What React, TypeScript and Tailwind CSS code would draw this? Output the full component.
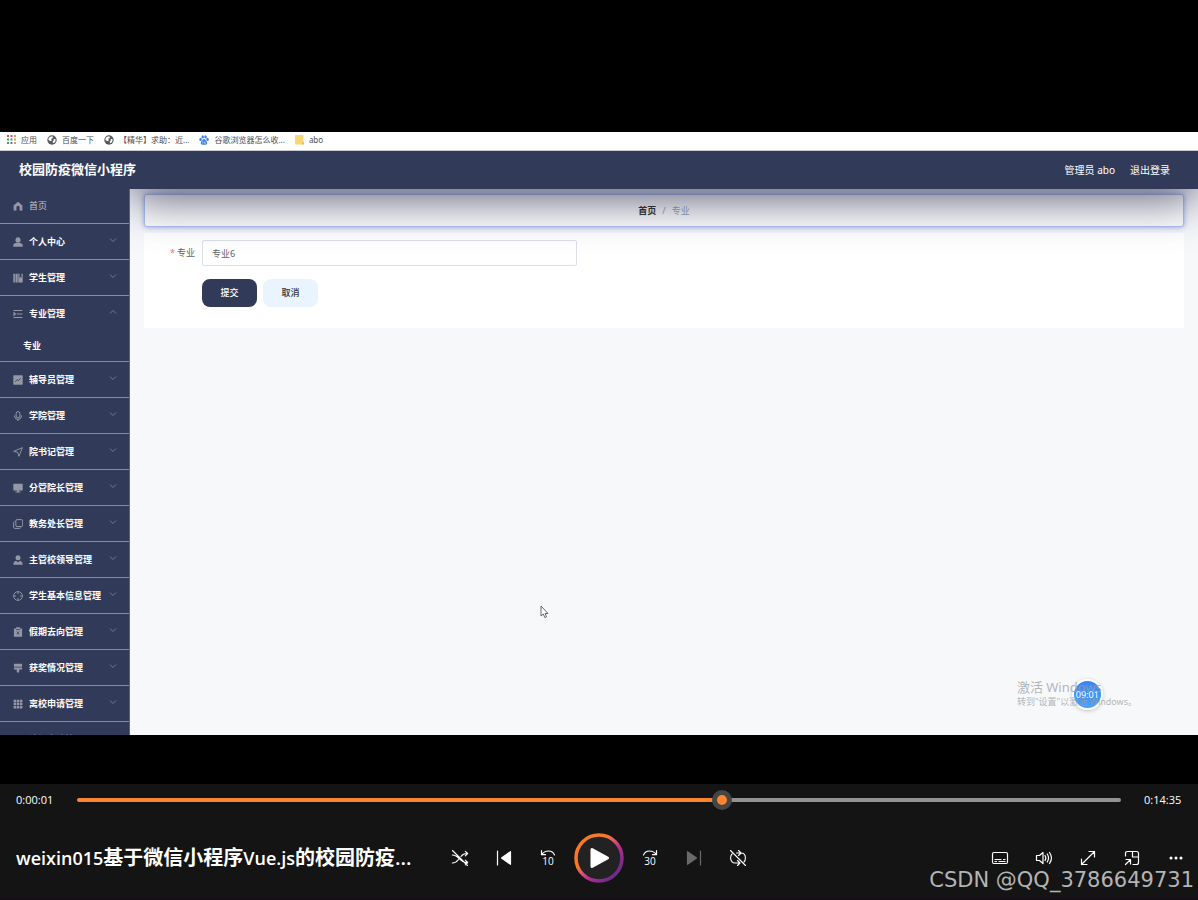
import type { ReactNode } from "react";
import { useState } from "react";

type MenuIconName =
  | "home"
  | "user"
  | "notebook"
  | "list"
  | "chart"
  | "mic"
  | "send"
  | "monitor"
  | "copy"
  | "person"
  | "aim"
  | "clipboard"
  | "brush"
  | "grid"
  | "flag";

interface MenuItem {
  icon: MenuIconName;
  label: string;
  children?: string[];
}

const MENU: MenuItem[] = [
  { icon: "user", label: "个人中心" },
  { icon: "notebook", label: "学生管理" },
  { icon: "list", label: "专业管理", children: ["专业"] },
  { icon: "chart", label: "辅导员管理" },
  { icon: "mic", label: "学院管理" },
  { icon: "send", label: "院书记管理" },
  { icon: "monitor", label: "分管院长管理" },
  { icon: "copy", label: "教务处长管理" },
  { icon: "person", label: "主管校领导管理" },
  { icon: "aim", label: "学生基本信息管理" },
  { icon: "clipboard", label: "假期去向管理" },
  { icon: "brush", label: "获奖情况管理" },
  { icon: "grid", label: "离校申请管理" },
  { icon: "flag", label: "请假申请管理" },
];

const MENU_ICONS: Record<MenuIconName, ReactNode> = {
  home: <path d="M8 1 1 7v8h4.500v-5a2.500 2.500 0 0 1 5 0v5H15V7z" fill="currentColor" />,
  user: (
    <g fill="currentColor">
      <rect x="4" y="0.500" width="8" height="8.500" rx="4" />
      <path d="M0.500 15.500V13c0-2 2-3.500 4.500-3.500h6c2.500 0 4.500 1.500 4.500 3.500v2.500z" />
    </g>
  ),
  notebook: (
    <g fill="currentColor">
      <path d="M0.500 1h2.500v14H0.500zM4 1h3.500v14H4z" />
      <path d="M8.500 1h2v7L12 6.500 13.500 8V1h2v14h-7z" />
    </g>
  ),
  list: (
    <path d="M1 2.500h14M6 8h9M1 13.500h14M1.500 5.800 4 8l-2.500 2.200z" stroke="currentColor" strokeWidth="1.700" fill="none" />
  ),
  chart: (
    <g>
      <rect x="0.500" y="0.500" width="15" height="15" rx="1" fill="currentColor" />
      <path d="m3.500 11 3-3.500 2 1.500 4-4" stroke="#323a59" strokeWidth="1.300" fill="none" />
    </g>
  ),
  mic: (
    <g stroke="currentColor" strokeWidth="1.600" fill="none">
      <rect x="5" y="1" width="6" height="10" rx="3" />
      <path d="M2.500 7v1a5.500 5.500 0 0 0 11 0V7M8 13.500V16" />
    </g>
  ),
  send: <path d="M1 7 15 1 9.500 15 7.500 8.500z" stroke="currentColor" strokeWidth="1.500" fill="none" />,
  monitor: <path d="M0.500 1h15v11h-6v1.500H12V15H4v-1.500h2.500V12h-6z" fill="currentColor" />,
  copy: (
    <g stroke="currentColor" strokeWidth="1.600" fill="none">
      <rect x="4.500" y="1" width="11" height="11" rx="2" />
      <path d="M2.500 4C1 4.500 1 5 1 6v7c0 1.500.5 2 2 2h7c1 0 2 0 2.500-1.500" />
    </g>
  ),
  person: (
    <g fill="currentColor">
      <circle cx="8" cy="4.500" r="4" />
      <path d="M0.500 15.500c0-3.500 1.500-5.500 4.500-6.500l3 3 3-3c3 1 4.500 3 4.500 6.500z" />
    </g>
  ),
  aim: (
    <g stroke="currentColor" strokeWidth="1.500" fill="none">
      <circle cx="8" cy="8" r="7" />
      <path d="M8 1v4M8 11v4M1 8h4M11 8h4" />
    </g>
  ),
  clipboard: (
    <g>
      <path d="M1.500 2.500H5V.5h6v2h3.500v13h-13z" fill="currentColor" />
      <path d="M5 4h6M6 7l4 5M10 7l-4 5" stroke="#323a59" strokeWidth="1.200" />
    </g>
  ),
  brush: <path d="M1.500 1h13v5h-13zM1.500 7h13v3.500H10V14l-2 2-2-2v-3.500H1.500z" fill="currentColor" />,
  grid: (
    <path
      d="M1 1h4v4H1zM6 1h4v4H6zM11 1h4v4h-4zM1 6h4v4H1zM6 6h4v4H6zM11 6h4v4h-4zM1 11h4v4H1zM6 11h4v4H6zM11 11h4v4h-4z"
      fill="currentColor"
    />
  ),
  flag: <path d="M2 1h2v14H2zM5 2h9v7H5z" fill="currentColor" />,
};

function MenuIcon({ name }: { name: MenuIconName }) {
  return (
    <svg viewBox="0 0 16 16" className="size-2.5 shrink-0 text-[#9498a6]" aria-hidden="true">
      {MENU_ICONS[name]}
    </svg>
  );
}

function Chevron({ up = false }: { up?: boolean }) {
  return (
    <svg viewBox="0 0 8 8" className="mb-1 ml-auto size-2 text-[#838899]" fill="none" stroke="currentColor" strokeWidth="0.8" aria-hidden="true">
      <path d={up ? "M1 5.500 4 2.500l3 3" : "M1 2.500 4 5.500l3-3"} />
    </svg>
  );
}

function Globe() {
  return (
    <svg viewBox="0 0 16 16" className="size-2.5" aria-hidden="true">
      <circle cx="8" cy="8" r="7.500" fill="#55585c" />
      <path d="M3 4.500C5 2 8 2 9.500 2.500L9 5 6.500 6 8 8.500 5.500 10 2 7.500zM11 6l3 1-1 4-3 2-1-2 1.500-2z" fill="#fff" />
    </svg>
  );
}

function AppsIcon() {
  const colors = ["#d9534a", "#d9534a", "#e0a33a", "#3f9b5b", "#4a7fd0", "#e0a33a", "#3f9b5b", "#4a7fd0", "#e0a33a"];
  return (
    <svg viewBox="0 0 9 9" className="size-[9px]" aria-hidden="true">
      {colors.map((c, i) => (
        <rect key={i} x={(i % 3) * 3.5} y={Math.floor(i / 3) * 3.5} width="2" height="2" fill={c} />
      ))}
    </svg>
  );
}

function Paw() {
  return (
    <svg viewBox="0 0 16 16" className="size-2.5" fill="#3d82e6" aria-hidden="true">
      <ellipse cx="2.500" cy="7" rx="2" ry="2.500" />
      <ellipse cx="6" cy="3" rx="2" ry="2.700" />
      <ellipse cx="10.500" cy="3" rx="2" ry="2.700" />
      <ellipse cx="13.700" cy="7" rx="2" ry="2.500" />
      <path d="M8 6.500c2 0 2.500 2 4 3.500 2 2 1.500 5.500-1.500 5.500h-5C2.500 15.500 2 12 4 10c1.500-1.500 2-3.500 4-3.500z" />
      <path d="M6 10.500v3M9 10.500v2.500h2" stroke="#fff" fill="none" />
    </svg>
  );
}

function Folder() {
  return (
    <svg viewBox="0 0 9 10" className="h-2.5 w-[9px]" aria-hidden="true">
      <rect width="8.500" height="9.500" rx="1" fill="#f8d775" />
      <path d="M7 7h2v2.500H7z" fill="#efc04f" />
    </svg>
  );
}

function Bookmark({ icon, label }: { icon: ReactNode; label: string }) {
  return (
    <a href="#" className="flex items-center gap-[5px] whitespace-nowrap">
      {icon}
      {label}
    </a>
  );
}

function BookmarkBar() {
  return (
    <div className="flex h-[19px] shrink-0 items-center gap-2.5 border-b border-[#c9cbd2] bg-white pb-[3px] pl-[7px] text-[8px] leading-3 text-[#4c4e52]">
      <Bookmark icon={<AppsIcon />} label="应用" />
      <Bookmark icon={<Globe />} label="百度一下" />
      <Bookmark icon={<Globe />} label="【精华】求助：近..." />
      <Bookmark icon={<Paw />} label="谷歌浏览器怎么收..." />
      <Bookmark icon={<Folder />} label="abo" />
    </div>
  );
}

function Sidebar() {
  return (
    <nav className="w-[130px] shrink-0 overflow-hidden border-r border-[#5a617b] bg-[#323a59] text-[9px] font-bold text-white">
      <a href="#" className="flex h-[35px] items-center gap-1.5 border-b border-[#868ca3] pl-[13px] font-normal text-[#c3c6d0]">
        <MenuIcon name="home" />
        首页
      </a>
      {MENU.map((item) => (
        <div key={item.label} className="border-b border-[#868ca3]">
          <button type="button" className="flex h-[35px] w-full items-center gap-1.5 whitespace-nowrap pl-[13px] pr-3">
            <MenuIcon name={item.icon} />
            {item.label}
            <Chevron up={!!item.children} />
          </button>
          {item.children?.map((child) => (
            <a key={child} href="#" className="flex h-[30px] items-center pl-[23px]">
              {child}
            </a>
          ))}
        </div>
      ))}
    </nav>
  );
}

function MajorForm() {
  const [major, setMajor] = useState("专业6");
  return (
    <form className="mt-1.5 bg-white pb-[21px] pt-[7px] text-[9px]" onSubmit={(e) => e.preventDefault()}>
      <div className="flex items-center">
        <label htmlFor="major" className="w-[58px] shrink-0 pr-[7px] text-right text-[#606266]">
          <span className="mr-0.5 text-[#e8737a]">*</span>专业
        </label>
        <input
          id="major"
          value={major}
          onChange={(e) => setMajor(e.target.value)}
          className="h-[26px] w-[375px] rounded-xs border border-[#dcdfe6] bg-white px-[9px] text-[#606266] outline-none"
        />
      </div>
      <div className="mt-[13px] flex gap-1.5 pl-[58px]">
        <button type="submit" className="h-7 w-[55px] rounded-lg bg-[#323a59] font-medium text-white">
          提交
        </button>
        <button type="button" className="h-7 w-[55px] rounded-lg bg-[#eaf4ff] font-medium text-[#303133]">
          取消
        </button>
      </div>
    </form>
  );
}

function ActivationNotice() {
  return (
    <div className="absolute bottom-[26px] right-[61px]">
      <div className="absolute left-[55px] top-0 flex size-[31px] items-center justify-center rounded-full border-2 border-white bg-linear-to-b from-[#3a84f4] to-[#4aa2fb] text-[9px] text-white shadow-[0_1px_4px_rgba(0,0,0,0.2)]">
        09:01
      </div>
      <div className="relative whitespace-nowrap text-[#9b9da1]/75">
        <p className="text-[13px] leading-4">激活 Windows</p>
        <p className="text-[9px] leading-[14px]">转到"设置"以激活 Windows。</p>
      </div>
    </div>
  );
}

function MousePointer() {
  return (
    <svg viewBox="0 0 9 14" className="absolute left-[410px] top-[416px] h-3.5 w-[9px]" aria-hidden="true">
      <path d="M1 1v10l2.300-2 1.500 3.500 1.700-.7L5 8.500h3z" fill="#fff" stroke="#55585e" strokeWidth="0.900" />
    </svg>
  );
}

function AdminPage() {
  return (
    <div className="flex h-full flex-col overflow-hidden bg-[#f6f8fa]">
      <BookmarkBar />
      <header className="flex h-[38px] shrink-0 items-center bg-[#323a59] pl-[19px] pr-7 text-[10px] text-white">
        <h1 className="text-[13px] font-bold">校园防疫微信小程序</h1>
        <span className="ml-auto">管理员 abo</span>
        <a href="#" className="ml-[15px]">
          退出登录
        </a>
      </header>
      <div className="flex min-h-0 flex-1">
        <Sidebar />
        <main className="relative min-w-0 flex-1 overflow-hidden px-3.5 pt-[5px]">
          <div className="flex h-[33px] items-center justify-center gap-1.5 rounded-[3px] border border-[#b3c0f3] bg-white text-[9px] shadow-[0_0_5px_rgba(90,115,230,0.6)]">
            <a href="#" className="font-bold text-[#303133]">
              首页
            </a>
            <span className="text-[#9aa3b5]">/</span>
            <span className="text-[#97a8be]">专业</span>
          </div>
          <MajorForm />
          {/* header shadow falling over the content */}
          <div className="pointer-events-none absolute inset-x-0 -top-24 h-24 shadow-[0_10px_46px_rgba(34,38,70,0.75)]" />
          <MousePointer />
          <ActivationNotice />
        </main>
      </div>
    </div>
  );
}

function ControlButton({ label, children, disabled = false }: { label: string; children: ReactNode; disabled?: boolean }) {
  return (
    <button type="button" aria-label={label} disabled={disabled} className="flex h-11 w-11 items-center justify-center text-white disabled:text-[#6a6a6a]">
      <svg viewBox="0 0 16 16" className="size-4 overflow-visible" fill="none" stroke="currentColor" strokeWidth="1.200" strokeLinecap="round" strokeLinejoin="round" aria-hidden="true">
        {children}
      </svg>
    </button>
  );
}

function PlayButton() {
  return (
    <button type="button" aria-label="播放" className="mx-1 size-[50px]">
      <svg viewBox="0 0 50 50" className="size-full" aria-hidden="true">
        <defs>
          <linearGradient id="ring" x1="0.150" y1="0.150" x2="0.850" y2="0.850">
            <stop offset="0.300" stopColor="#f5792a" />
            <stop offset="0.450" stopColor="#e9556a" />
            <stop offset="0.650" stopColor="#b92d93" />
            <stop offset="1" stopColor="#6f2c8c" />
          </linearGradient>
        </defs>
        <circle cx="25" cy="25" r="23" fill="#222" stroke="url(#ring)" strokeWidth="3.500" />
        <path d="M18 16.500v17l15.500-8.500z" fill="#fff" stroke="#fff" strokeWidth="3" strokeLinejoin="round" />
      </svg>
    </button>
  );
}

function PlayerBar() {
  const [position, setPosition] = useState(62);
  // the thumb is 20px wide, so its centre travels 20px less than the track
  const fill = `calc(10px + (100% - 20px) * ${position / 100})`;
  return (
    <footer className="shrink-0 bg-[#141414] font-['Open_Sans','Noto_Sans_CJK_SC',sans-serif] text-white shadow-[inset_0_-2px_0_#170d15]">
      <div className="flex h-8 items-center text-[11px]">
        <span className="w-[77px] shrink-0 pl-4">0:00:01</span>
        <input
          type="range"
          aria-label="播放进度"
          min={0}
          max={100}
          value={position}
          onChange={(e) => setPosition(Number(e.target.value))}
          style={{ background: `linear-gradient(to right, #ff8430 ${fill}, #929292 ${fill})` }}
          className="h-1 min-w-0 flex-1 appearance-none rounded-full [&::-webkit-slider-thumb]:size-5 [&::-webkit-slider-thumb]:appearance-none [&::-webkit-slider-thumb]:rounded-full [&::-webkit-slider-thumb]:border-5 [&::-webkit-slider-thumb]:border-[#454545] [&::-webkit-slider-thumb]:bg-[#ff8430]"
        />
        <span className="w-[77px] shrink-0 pl-[23px]">0:14:35</span>
      </div>
      <div className="relative grid h-[84px] grid-cols-[1fr_auto_1fr] items-center">
        <h2 className="truncate pl-4 text-xl font-semibold">
          <span className="text-lg">weixin015</span>基于微信小程序<span className="text-lg">Vue.js</span>的校园防疫...
        </h2>
        <div className="flex items-center">
          <ControlButton label="随机播放已关闭">
            <path
              d="M.3 13c3 0 4.700-1.500 6.200-3.500M9 6.500C10.300 4.500 12 3.500 15 3.500M.3 5c3.500 0 5 1.500 7.200 4s4 3.500 7.500 3.500M13.300 1.300l2.400 2.200-2.400 2.300M13.300 10.200l2.400 2.300-2.400 2.300M.5.500l15 15"
              strokeWidth="1.100"
            />
          </ControlButton>
          <ControlButton label="上一个">
            <path d="M1.500 1v14" />
            <path d="M14.500 1.700v12.600L5.500 8z" fill="currentColor" />
          </ControlButton>
          <ControlButton label="后退 10 秒">
            <path d="M1.500.7v4h4M1.500 4.700C3.500 2 6 1 8.500 1s5 1.500 6 4" />
            <text x="8" y="15" textAnchor="middle" fill="currentColor" stroke="none" className="text-[10px] font-medium">
              10
            </text>
          </ControlButton>
          <PlayButton />
          <ControlButton label="前进 30 秒">
            <path d="M14.500.7v4h-4M14.500 4.700C12.500 2 10 1 7.500 1s-5 1.500-6 4" />
            <text x="8" y="15" textAnchor="middle" fill="currentColor" stroke="none" className="text-[10px] font-medium">
              30
            </text>
          </ControlButton>
          <ControlButton label="下一个" disabled>
            <path d="M14.500 1v14" />
            <path d="M1.500 1.700v12.600L10.500 8z" fill="currentColor" />
          </ControlButton>
          <ControlButton label="循环已关闭">
            <path
              d="M2 4C1 5 .6 6.300.6 8c0 3 1.800 5 4.500 5H9.500M7.500 10.500 10 13l-2.500 2.500M6.500 3H11c2.700 0 4.400 2 4.400 5 0 1.700-.4 3-1.400 4M8.500.5 11 3 8.500 5.500M.5.500l15 15"
              strokeWidth="1.100"
            />
          </ControlButton>
        </div>
        <div className="flex justify-end">
          <ControlButton label="字幕">
            <rect x="0.500" y="2.500" width="15" height="11" rx="1.500" />
            <path d="M2.500 9.500h7M11 9.500h2.500M2.500 11.500h2.500M6.500 11.500h7" strokeWidth="1" strokeLinecap="butt" />
          </ControlButton>
          <ControlButton label="音量">
            <path d="M.5 5.500v5h3L7 13.500v-11L3.500 5.500zM9 5.500c1 1.500 1 3.500 0 5M11.200 4c1.700 2.500 1.700 5.500 0 8M13.500 2.500c2.500 3.500 2.500 7.500 0 11" />
          </ControlButton>
          <ControlButton label="全屏">
            <path d="M1.500 14.500l13-13M9 1.500h5.500V7M1.500 9v5.500H7" />
          </ControlButton>
          <ControlButton label="迷你播放器">
            <path d="M1.500 6V3.500c0-1.300.7-2 2-2h9c1.300 0 2 .7 2 2v9c0 1.300-.7 2-2 2H9M8.500 1.500V7h6M1.500 14.500 6 10M2 9.500h4.500V14" />
          </ControlButton>
          <ControlButton label="更多">
            <g fill="currentColor" stroke="none">
              <circle cx="3" cy="8" r="1.500" />
              <circle cx="8" cy="8" r="1.500" />
              <circle cx="13" cy="8" r="1.500" />
            </g>
          </ControlButton>
        </div>
        <p className="pointer-events-none absolute bottom-1.5 right-1 font-['DejaVu_Sans',sans-serif] text-[21px] leading-7 text-[#b4b4b4]">
          CSDN @QQ_3786649731
        </p>
      </div>
    </footer>
  );
}

export default function App() {
  return (
    <div className="flex h-screen flex-col bg-black font-['Noto_Sans','Noto_Sans_CJK_SC',sans-serif]">
      <div className="min-h-0 flex-1 pb-[49px] pt-[132px]">
        <AdminPage />
      </div>
      <PlayerBar />
    </div>
  );
}
